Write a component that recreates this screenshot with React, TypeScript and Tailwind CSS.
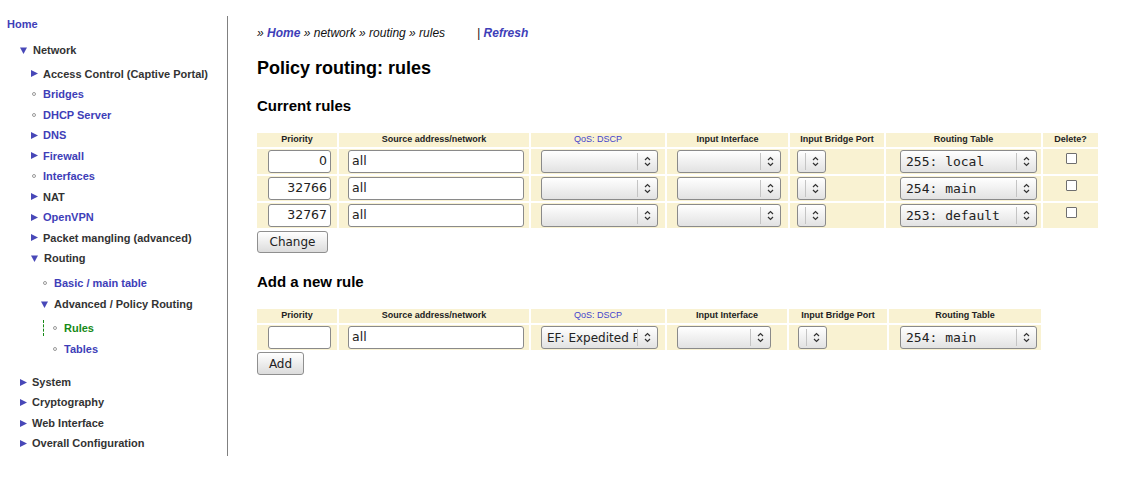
import React from 'react';
import clsx from 'clsx';

type NavItem = {
  label: string;
  row: string;
  marker: 'right' | 'down' | 'dot' | 'none' | 'current';
  tone: 'link' | 'dark' | 'active';
};

const nav: NavItem[] = [
  { label: 'Home', row: 'h-[21px] pl-[7px]', marker: 'none', tone: 'link' },
  { label: 'Network', row: 'mt-[5px] pl-[20px]', marker: 'down', tone: 'dark' },
  { label: 'Access Control (Captive Portal)', row: 'mt-[3px] pl-[31px]', marker: 'right', tone: 'dark' },
  { label: 'Bridges', row: 'pl-[32px]', marker: 'dot', tone: 'link' },
  { label: 'DHCP Server', row: 'pl-[32px]', marker: 'dot', tone: 'link' },
  { label: 'DNS', row: 'pl-[31px]', marker: 'right', tone: 'link' },
  { label: 'Firewall', row: 'pl-[31px]', marker: 'right', tone: 'link' },
  { label: 'Interfaces', row: 'pl-[32px]', marker: 'dot', tone: 'link' },
  { label: 'NAT', row: 'pl-[31px]', marker: 'right', tone: 'dark' },
  { label: 'OpenVPN', row: 'pl-[31px]', marker: 'right', tone: 'link' },
  { label: 'Packet mangling (advanced)', row: 'pl-[31px]', marker: 'right', tone: 'dark' },
  { label: 'Routing', row: 'pl-[31px]', marker: 'down', tone: 'dark' },
  { label: 'Basic / main table', row: 'mt-[4.5px] pl-[43px]', marker: 'dot', tone: 'link' },
  { label: 'Advanced / Policy Routing', row: 'mt-[0.5px] pl-[41px]', marker: 'down', tone: 'dark' },
  { label: 'Rules', row: 'mt-[3.5px] pl-[43px]', marker: 'current', tone: 'active' },
  { label: 'Tables', row: 'mt-[0.5px] pl-[53px]', marker: 'dot', tone: 'link' },
  { label: 'System', row: 'mt-[12.25px] pl-[20px]', marker: 'right', tone: 'dark' },
  { label: 'Cryptography', row: 'pl-[20px]', marker: 'right', tone: 'dark' },
  { label: 'Web Interface', row: 'pl-[20px]', marker: 'right', tone: 'dark' },
  { label: 'Overall Configuration', row: 'pl-[20px]', marker: 'right', tone: 'dark' },
];

function Marker({ kind }: { kind: NavItem['marker'] }) {
  if (kind === 'right')
    return (
      <svg width="7" height="7" viewBox="0 0 7 7" className="mr-[5px] shrink-0">
        <polygon points="0,0 7,3.5 0,7" fill="#4848b8" />
      </svg>
    );
  if (kind === 'down')
    return (
      <svg width="7" height="7" viewBox="0 0 7 7" className="mr-[6px] shrink-0">
        <polygon points="0,0.5 7,0.5 3.5,7" fill="#4848b8" />
      </svg>
    );
  if (kind === 'dot') return <span className="mr-[7px] h-[4px] w-[4px] shrink-0 rounded-full border border-[#999]" />;
  if (kind === 'current')
    return (
      <>
        <span className="mr-[9px] h-[16px] w-0 border-l border-dashed border-[#178a17]" />
        <span className="mr-[7px] h-[4px] w-[4px] shrink-0 rounded-full border border-[#999]" />
      </>
    );
  return null;
}

function Chevrons() {
  return (
    <svg width="7" height="11" viewBox="0 0 7 11">
      <path d="M1 4 L3.5 1.5 L6 4" fill="none" stroke="#333" strokeWidth="1.2" />
      <path d="M1 7 L3.5 9.5 L6 7" fill="none" stroke="#333" strokeWidth="1.2" />
    </svg>
  );
}

function Select({ w, value, mono }: { w: string; value?: string; mono?: boolean }) {
  return (
    <div className={clsx('flex h-[23px] items-center rounded-[3px] border border-[#8a8a8a] bg-linear-to-b from-white to-[#e2e2e2]', w)}>
      <span
        className={clsx(
          'min-w-0 flex-1 overflow-hidden whitespace-nowrap pl-[5px] text-[#222]',
          mono ? "font-['DejaVu_Sans_Mono',monospace] text-[13px]" : "font-['DejaVu_Sans',sans-serif] text-[12px]"
        )}
      >
        {value}
      </span>
      <span className="h-[17px] w-px bg-[#c4c4c4]" />
      <span className="flex w-[19px] shrink-0 justify-center">
        <Chevrons />
      </span>
    </div>
  );
}

function TextBox({ w, value, right }: { w: string; value: string; right?: boolean }) {
  return (
    <div
      className={clsx(
        "flex h-[23px] items-center rounded-[3px] border border-[#8a8a8a] bg-white px-[3px] font-['DejaVu_Sans',sans-serif] text-[12.5px] text-[#222]",
        right ? 'justify-end' : 'justify-start',
        w
      )}
    >
      {value}
    </div>
  );
}

function Button({ label, w }: { label: string; w: string }) {
  return (
    <div
      className={clsx(
        "flex items-center justify-center rounded-[3px] border border-[#8f8f8f] bg-linear-to-b from-white to-[#dcdcdc] font-['DejaVu_Sans',sans-serif] text-[12px] text-[#222]",
        w
      )}
    >
      {label}
    </div>
  );
}

function Head({ children, link }: { children: React.ReactNode; link?: boolean }) {
  return (
    <div
      className={clsx(
        'flex h-[14px] items-center justify-center bg-[#f9f2d2] text-[9px]',
        link ? 'font-normal text-[#4444cc]' : 'font-bold text-[#222]'
      )}
    >
      {children}
    </div>
  );
}

function Cell({ children, cls }: { children: React.ReactNode; cls: string }) {
  return <div className={clsx('flex h-[25px] bg-[#f9f2d2]', cls)}>{children}</div>;
}

const rules = [
  { prio: '0', table: '255: local' },
  { prio: '32766', table: '254: main' },
  { prio: '32767', table: '253: default' },
];

export default function App() {
  return (
    <div className="flex min-h-[484px] w-[1126px] bg-white font-['Liberation_Sans',Arial,sans-serif]">
      {/* sidebar */}
      <div className="w-[227px] shrink-0 pt-[14px] text-[11px] font-bold">
        {nav.map((item) => (
          <div key={item.label} className={clsx('flex h-[20.5px] items-center', item.row)}>
            <Marker kind={item.marker} />
            <span
              className={clsx(
                'whitespace-nowrap',
                item.tone === 'link' && 'text-[#3e3eb8]',
                item.tone === 'dark' && 'text-[#333]',
                item.tone === 'active' && 'text-[#178a17]'
              )}
            >
              {item.label}
            </span>
          </div>
        ))}
      </div>
      <div className="mt-[16px] h-[440px] w-px shrink-0 bg-[#808080]" />

      {/* main */}
      <div className="flex flex-col pl-[29px]">
        <div className="mt-[25px] h-[16px] whitespace-pre text-[12px] italic leading-[16px] text-[#111]">
          <span>» </span>
          <span className="font-bold text-[#3e3eb8]">Home</span>
          <span> » network » routing » rules</span>
          <span className="ml-[32px]">| </span>
          <span className="font-bold text-[#3e3eb8]">Refresh</span>
        </div>

        <h1 className="mt-[16px] h-[22px] text-[18px] font-bold leading-[22px] text-black">Policy routing: rules</h1>
        <h2 className="mt-[18px] h-[18px] text-[15px] font-bold leading-[18px] text-black">Current rules</h2>

        <div className="mt-[18px] grid w-max grid-cols-[80px_190px_134px_121px_94px_155px_55px] gap-[2px]">
          <Head>Priority</Head>
          <Head>Source address/network</Head>
          <Head link>QoS: DSCP</Head>
          <Head>Input Interface</Head>
          <Head>Input Bridge Port</Head>
          <Head>Routing Table</Head>
          <Head>Delete?</Head>
          {rules.map((r) => (
            <React.Fragment key={r.prio}>
              <Cell cls="items-center pl-[11px]">
                <TextBox w="w-[63px]" value={r.prio} right />
              </Cell>
              <Cell cls="items-center pl-[9px]">
                <TextBox w="w-[176px]" value="all" />
              </Cell>
              <Cell cls="items-center pl-[10px]">
                <Select w="w-[117px]" />
              </Cell>
              <Cell cls="items-center pl-[10px]">
                <Select w="w-[104px]" />
              </Cell>
              <Cell cls="items-center pl-[7px]">
                <Select w="w-[29px]" />
              </Cell>
              <Cell cls="items-center pl-[14px]">
                <Select w="w-[137px]" value={r.table} mono />
              </Cell>
              <Cell cls="items-start justify-center pt-[4px]">
                <span className="ml-[2px] h-[11px] w-[11px] rounded-[1px] border border-[#6f6f6f] bg-white" />
              </Cell>
            </React.Fragment>
          ))}
        </div>
        <Button label="Change" w="mt-[3px] h-[22px] w-[71px]" />

        <h2 className="mt-[20px] h-[18px] text-[15px] font-bold leading-[18px] text-black">Add a new rule</h2>

        <div className="mt-[18px] grid w-max grid-cols-[80px_190px_134px_120px_98px_152px] gap-[2px]">
          <Head>Priority</Head>
          <Head>Source address/network</Head>
          <Head link>QoS: DSCP</Head>
          <Head>Input Interface</Head>
          <Head>Input Bridge Port</Head>
          <Head>Routing Table</Head>
          <Cell cls="items-center pl-[11px]">
            <TextBox w="w-[63px]" value="" right />
          </Cell>
          <Cell cls="items-center pl-[9px]">
            <TextBox w="w-[176px]" value="all" />
          </Cell>
          <Cell cls="items-center pl-[10px]">
            <Select w="w-[117px]" value="EF: Expedited Forwarding" />
          </Cell>
          <Cell cls="items-center pl-[10px]">
            <Select w="w-[94px]" />
          </Cell>
          <Cell cls="items-center pl-[9px]">
            <Select w="w-[29px]" />
          </Cell>
          <Cell cls="items-center pl-[11px]">
            <Select w="w-[137px]" value="254: main" mono />
          </Cell>
        </div>
        <Button label="Add" w="mt-[2px] h-[23px] w-[47px]" />
      </div>
    </div>
  );
}
